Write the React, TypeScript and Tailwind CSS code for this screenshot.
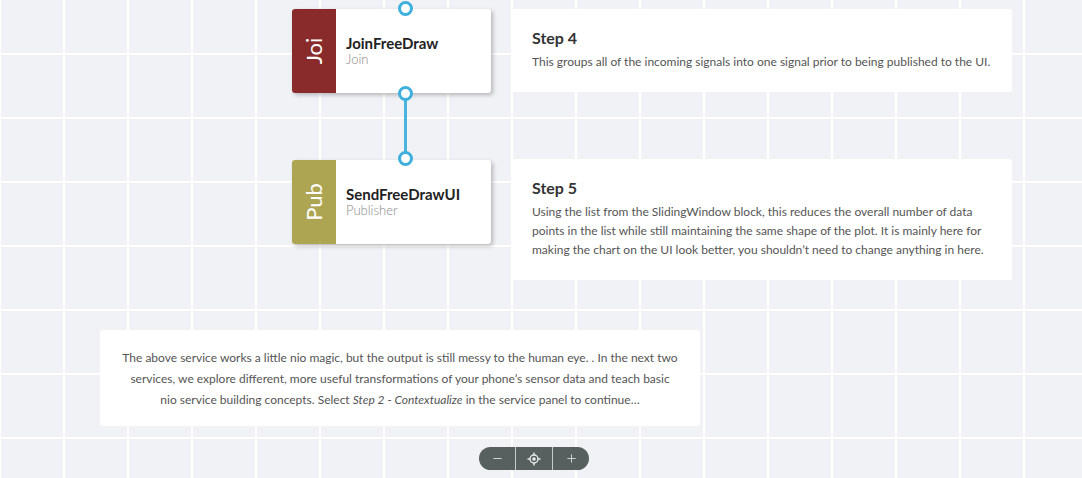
import { Minus, Plus } from "lucide-react";

type Block = {
    name: string;
    kind: string;
    tag: string;
    color: string;
    top: string;
};

const blocks: Block[] = [
    { name: "JoinFreeDraw", kind: "Join", tag: "Joi", color: "bg-[#8a2b2b]", top: "top-[9px]" },
    { name: "SendFreeDrawUI", kind: "Publisher", tag: "Pub", color: "bg-[#aea553]", top: "top-[160px]" },
];

function Port({ className }: { className: string }) {
    return (
        <div
            className={`absolute left-[398px] z-20 h-[15px] w-[15px] rounded-full border-[3px] border-[#3fb0dd] bg-white ${className}`}
        />
    );
}

function BlockNode({ block }: { block: Block }) {
    return (
        <div
            className={`absolute left-[292px] ${block.top} z-10 flex h-[84px] w-[199px] overflow-hidden rounded-[3px] bg-white shadow-[2px_2px_4px_rgba(0,0,0,0.25)]`}
        >
            <div className={`flex w-[44px] shrink-0 items-center justify-center ${block.color}`}>
                <span className="-rotate-90 text-[22px] leading-none text-white">{block.tag}</span>
            </div>
            <div className="flex flex-col justify-center pb-[2px] pl-[10px]">
                <div className="text-[15px] font-bold leading-[18px] text-[#222]">{block.name}</div>
                <div className="text-[13px] font-light leading-[15px] text-[#888]">{block.kind}</div>
            </div>
        </div>
    );
}

function StepCard({ title, top, children }: { title: string; top: string; children: React.ReactNode }) {
    return (
        <div className={`absolute left-[511px] ${top} w-[501px] rounded-[3px] bg-white px-[21px] pb-[21px] pt-[19px]`}>
            <div className="text-[16px] font-bold leading-[20px] text-[#333]">{title}</div>
            <p className="mt-[4px] text-[12px] leading-[19px] text-[#555]">{children}</p>
        </div>
    );
}

export default function App() {
    return (
        <div
            className="relative h-screen w-full overflow-hidden bg-[#f1f2f6] bg-[linear-gradient(to_right,#ffffff_2px,transparent_2px),linear-gradient(to_bottom,#ffffff_2px,transparent_2px)] bg-[length:64px_64px] bg-[position:-1px_53px]"
            style={{ fontFamily: "Lato, 'Open Sans', sans-serif" }}
        >
            {/* connector between blocks */}
            <div className="absolute left-[404px] top-[94px] z-0 h-[64px] w-[3px] bg-[#4ab3de]" />
            <Port className="top-[1px]" />
            <Port className="top-[86px]" />
            <Port className="top-[151px]" />

            {blocks.map((b) => (
                <BlockNode key={b.name} block={b} />
            ))}

            <StepCard title="Step 4" top="top-[9px]">
                This groups all of the incoming signals into one signal prior to being published to the UI.
            </StepCard>

            <StepCard title="Step 5" top="top-[159px]">
                Using the list from the SlidingWindow block, this reduces the overall number of data points in the
                list while still maintaining the same shape of the plot. It is mainly here for making the chart on the
                UI look better, you shouldn’t need to change anything in here.
            </StepCard>

            <div className="absolute left-[100px] top-[330px] flex h-[96px] w-[600px] items-center justify-center rounded-[3px] bg-white px-[21px]">
                <p className="text-center text-[12px] leading-[21px] text-[#555]">
                    The above service works a little nio magic, but the output is still messy to the human eye. . In the
                    next two services, we explore different, more useful transformations of your phone’s sensor data and
                    teach basic nio service building concepts. Select <em>Step 2 - Contextualize</em> in the service
                    panel to continue…
                </p>
            </div>

            {/* zoom controls */}
            <div className="absolute left-[479px] top-[447px] flex h-[23px] w-[110px] overflow-hidden rounded-full bg-[#56605f] text-[#e8eaea]">
                <button className="flex flex-1 items-center justify-center border-r border-[#c9cccc]">
                    <Minus size={13} strokeWidth={1.5} />
                </button>
                <button className="flex flex-1 items-center justify-center border-r border-[#c9cccc]">
                    <svg width="14" height="14" viewBox="0 0 14 14" fill="none" stroke="currentColor" strokeWidth="1.4">
                        <circle cx="7" cy="7" r="4" />
                        <circle cx="7" cy="7" r="1.8" fill="currentColor" stroke="none" />
                        <path d="M7 0.5v2.5M7 11v2.5M0.5 7h2.5M11 7h2.5" />
                    </svg>
                </button>
                <button className="flex flex-1 items-center justify-center">
                    <Plus size={13} strokeWidth={1.5} />
                </button>
            </div>
        </div>
    );
}
